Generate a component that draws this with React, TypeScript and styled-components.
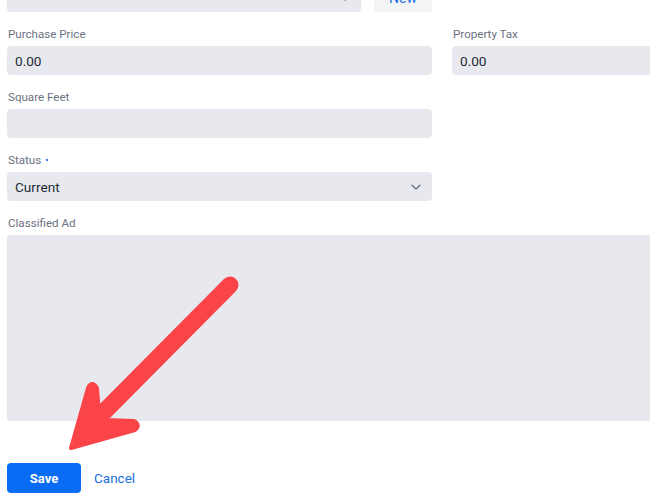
import React from 'react'
import styled, { createGlobalStyle } from 'styled-components'

const GlobalStyle = createGlobalStyle`
  html, body {
    margin: 0;
    padding: 0;
    background: #ffffff;
    overflow: hidden;
  }
  body {
    font-family: Roboto, "Liberation Sans", Arial, sans-serif;
  }
`

const Page = styled.div`
  position: relative;
  width: 650px;
  height: 501px;
  overflow: hidden;
`

const Form = styled.form`
  margin-top: -17px;
  padding-left: 7px;
  display: grid;
  grid-template-columns: 425px 425px;
  column-gap: 20px;
  row-gap: 14px;
  width: 870px;
`

const Field = styled.div<{ $wide?: boolean }>`
  display: flex;
  flex-direction: column;
  gap: 4px;
  grid-column: ${p => (p.$wide ? '1 / span 2' : 'auto')};
`

const Label = styled.label`
  display: block;
  height: 16px;
  font-size: 11.6px;
  line-height: 16px;
  color: #6b7280;
  padding-left: 1px;
`

const Required = styled.span`
  color: #2563eb;
  margin-left: 4px;
  font-size: 10px;
  line-height: 0;
`

const Input = styled.div`
  height: 29px;
  box-sizing: border-box;
  background: #e7e9ee;
  border-radius: 4px;
  padding: 0 8px;
  display: flex;
  align-items: center;
  font-size: 13.6px;
  color: #1f2937;
`

const Select = styled(Input)`
  justify-content: space-between;
  padding-right: 10px;
`

const TextArea = styled.div`
  height: 186px;
  background: #e7e9ee;
  border-radius: 4px;
`

const PickerRow = styled.div`
  display: flex;
  gap: 13px;
`

const Grow = styled.div`
  flex: 1;
`

const NewButton = styled.div`
  width: 58px;
  height: 29px;
  background: #f3f4f6;
  border-radius: 4px;
  color: #1d6fe0;
  font-size: 14px;
  display: flex;
  align-items: center;
  justify-content: center;
`

const Actions = styled.div`
  grid-column: 1 / span 2;
  margin-top: 28px;
  display: flex;
  align-items: center;
  gap: 13px;
`

const SaveButton = styled.button`
  width: 74px;
  height: 30px;
  border: none;
  border-radius: 4px;
  background: #0a6cf5;
  color: #ffffff;
  font-family: inherit;
  font-weight: 700;
  font-size: 13px;
`

const CancelLink = styled.a`
  color: #1a6fdc;
  font-size: 13.5px;
`

const Overlay = styled.svg`
  position: absolute;
  left: 0;
  top: 0;
  pointer-events: none;
`

const Chevron = () => (
  <svg width="12" height="12" viewBox="0 0 12 12">
    <path d="M2 4.2 L6 8 L10 4.2" fill="none" stroke="#6b7280" strokeWidth="1.4" strokeLinecap="round" strokeLinejoin="round" />
  </svg>
)

const App: React.FC = () => {
  return (
    <Page>
      <GlobalStyle />
      <Form>
        <PickerRow>
          <Grow>
            <Select>
              <span />
              <Chevron />
            </Select>
          </Grow>
          <NewButton>New</NewButton>
        </PickerRow>
        <div />

        <Field>
          <Label>Purchase Price</Label>
          <Input>0.00</Input>
        </Field>
        <Field>
          <Label>Property Tax</Label>
          <Input>0.00</Input>
        </Field>

        <Field>
          <Label>Square Feet</Label>
          <Input />
        </Field>
        <div />

        <Field>
          <Label>
            Status<Required>•</Required>
          </Label>
          <Select>
            <span>Current</span>
            <Chevron />
          </Select>
        </Field>
        <div />

        <Field $wide>
          <Label>Classified Ad</Label>
          <TextArea />
        </Field>

        <Actions>
          <SaveButton type="button">Save</SaveButton>
          <CancelLink>Cancel</CancelLink>
        </Actions>
      </Form>

      <Overlay width="650" height="501" viewBox="0 0 650 501">
        <line x1="230" y1="285" x2="96" y2="420" stroke="#fa4448" strokeWidth="17" strokeLinecap="round" />
        <path
          d="M71 448 L88 388 Q92 380 97 388 L99 413 L106 420 L134 421 Q141 425 135 430 Z"
          fill="#fa4448"
          stroke="#fa4448"
          strokeWidth="4"
          strokeLinejoin="round"
        />
      </Overlay>
    </Page>
  )
}

export default App
